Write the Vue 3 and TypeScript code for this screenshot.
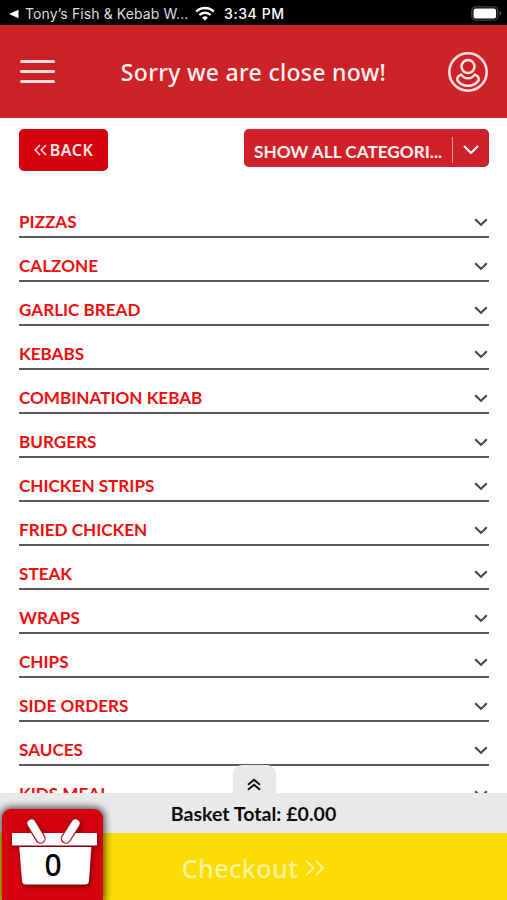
<script setup lang="ts">
import { ref } from 'vue'

const categories: string[] = [
  'PIZZAS',
  'CALZONE',
  'GARLIC BREAD',
  'KEBABS',
  'COMBINATION KEBAB',
  'BURGERS',
  'CHICKEN STRIPS',
  'FRIED CHICKEN',
  'STEAK',
  'WRAPS',
  'CHIPS',
  'SIDE ORDERS',
  'SAUCES',
  'KIDS MEAL',
]
const itemCount = ref(0)
const total = ref(0)
</script>

<template>
  <div class="screen">
    <div class="status">
      <svg class="return" width="10" height="10" viewBox="0 0 10 10"><path d="M0 5 9.5 .8v8.4z" fill="#fff" /></svg>
      <span class="return-app">Tony’s Fish &amp; Kebab W...</span>
      <svg class="wifi" width="20" height="15" viewBox="0 0 20 15" fill="none" stroke="#fff" stroke-width="2.5">
        <path d="M1.2 5.6a12.4 12.4 0 0 1 17.6 0" />
        <path d="M4.4 9a7.8 7.8 0 0 1 11.2 0" />
        <path d="M10 14.6 7.1 11.7a4.2 4.2 0 0 1 5.8 0z" fill="#fff" stroke="none" />
      </svg>
      <span class="time">3:34 PM</span>
      <svg class="battery" width="31" height="16" viewBox="0 0 31 16">
        <rect x=".8" y=".8" width="26" height="13.4" rx="4" fill="none" stroke="#444" stroke-width="1.3" />
        <rect x="2.5" y="2.5" width="22.6" height="10" rx="2.2" fill="#fff" />
        <path d="M28.6 5.2v4.6q1.5-.6 1.500-2.300t-1.500-2.300z" fill="#666" />
      </svg>
    </div>

    <header class="header">
      <button class="menu" aria-label="Menu"><i /><i /><i /></button>
      <h1 class="title">Sorry we are close now!</h1>
      <svg class="user" width="42" height="42" viewBox="0 0 42 42" fill="none" stroke="#ffe4e2" stroke-width="2.5">
        <circle cx="21" cy="21" r="18.7" />
        <circle cx="21" cy="15.5" r="6.5" />
        <path d="M14.300 23.600c-2.700 1-4.300 3.500-4 5.600 2.300 3.400 6.300 5.500 10.700 5.500s8.400-2.100 10.700-5.500c.3-2.100-1.300-4.600-4-5.600-1.700 2.400-4.100 3.700-6.700 3.700s-5-1.300-6.700-3.700z" stroke-linejoin="round" />
      </svg>
    </header>

    <main class="content">
      <div class="tools">
        <button class="back">
          <svg width="13" height="12" viewBox="0 0 13 12" fill="none" stroke="#ffdcdc" stroke-width="1.5"><path d="M6 1 1.200 6 6 11M12 1 7.200 6l4.800 5" /></svg>
          <span>BACK</span>
        </button>
        <div class="select">
          <span class="select-label">SHOW ALL CATEGORI...</span>
          <svg width="16" height="10" viewBox="0 0 16 10" fill="none" stroke="#fff" stroke-width="2" stroke-linecap="round" stroke-linejoin="round"><path d="M1.500 1.500 8 8l6.500-6.500" /></svg>
        </div>
      </div>
      <ul class="list">
        <li v-for="name in categories" :key="name" class="row">
          <span>{{ name }}</span>
          <svg width="14" height="9" viewBox="0 0 14 9" fill="none" stroke="#444" stroke-width="2.1"><path d="M1.200 1.300 7 6.900l5.800-5.600" /></svg>
        </li>
      </ul>
    </main>

    <footer class="footer">
      <button class="expand" aria-label="Expand basket">
        <svg width="14" height="13" viewBox="0 0 14 13" fill="none" stroke="#111" stroke-width="2"><path d="M1 6.800 7 1.800l6 5M1 11.800l6-5 6 5" /></svg>
      </button>
      <div class="total">Basket Total: £{{ total.toFixed(2) }}</div>
      <div class="checkout">
        <span>Checkout</span>
        <svg width="20" height="16" viewBox="0 0 20 16" fill="none" stroke="#fff39a" stroke-width="1.9"><path d="M1.500 1 8.500 8l-7 7M11 1l7 7-7 7" /></svg>
      </div>
      <div class="basket">
        <svg class="basket-art" width="101" height="91" viewBox="0 0 101 91">
          <g fill="#fff">
            <rect x="10" y="24" width="85" height="12.400" rx="1" />
            <path d="M17.300 38h72L87 72q-.4 3.500-4 3.500H24q-3.600 0-4-3.500z" />
          </g>
          <g stroke-linecap="round">
            <path d="M29.500 14.500 38.500 29.500M73.500 14.500 64 29.500" stroke="#b5121b" stroke-width="10.500" />
            <path d="M29.500 14.500 38.500 29.500M73.500 14.500 64 29.500" stroke="#fff" stroke-width="8" />
          </g>
        </svg>
        <span class="count">{{ itemCount }}</span>
      </div>
    </footer>
  </div>
</template>

<style>
body {
  background: #fff;
}
</style>

<style scoped>
* {
  box-sizing: border-box;
}
button {
  border: 0;
  padding: 0;
  margin: 0;
}
svg {
  display: block;
  flex: none;
}
.screen {
  width: 507px;
  height: 900px;
  display: grid;
  grid-template-rows: 25px 93px minmax(0, 1fr) 107px;
  overflow: hidden;
  background: #fff;
  font-family: Lato, sans-serif;
}
.status {
  display: flex;
  align-items: center;
  padding: 2px 5px 0 9px;
  background: #000;
  color: #fff;
  font-family: Inter, sans-serif;
  white-space: nowrap;
}
.return-app {
  width: 164px;
  margin-left: 6px;
  color: #ddd;
  font-size: 14px;
  letter-spacing: 0.1px;
}
.wifi {
  margin-left: 6px;
}
.time {
  margin-left: 9px;
  font-size: 14px;
  font-weight: 500;
  letter-spacing: 0.6px;
}
.battery {
  margin-left: auto;
}
.header {
  display: flex;
  align-items: center;
  justify-content: space-between;
  padding: 0 18px 0 20px;
  background: #ce2229;
}
.menu {
  display: grid;
  gap: 7px;
  width: 35px;
  background: none;
}
.menu i {
  height: 3px;
  border-radius: 2px;
  background: #ffdedc;
}
.title {
  margin: 0;
  padding-left: 5px;
  color: #fff3f2;
  font: 500 23px 'Noto Sans', sans-serif;
  letter-spacing: 0.3px;
  white-space: nowrap;
}
.content {
  padding: 11px 18px 0 19px;
  overflow: hidden;
}
.tools {
  display: flex;
  justify-content: space-between;
  align-items: flex-start;
  height: 65px;
}
.back {
  display: flex;
  align-items: center;
  justify-content: center;
  gap: 3px;
  width: 89px;
  height: 42px;
  border-radius: 5px;
  background: #d4020e;
  color: #ffe6e6;
  font: 600 16px 'Noto Sans', sans-serif;
  letter-spacing: 0.5px;
}
.select {
  display: flex;
  align-items: center;
  width: 245px;
  height: 38px;
  padding: 6px 10px 0;
  border-radius: 5px;
  background: #ce2129;
  color: #fff0ef;
  font-size: 17.2px;
  font-weight: 700;
  white-space: nowrap;
}
.select-label {
  width: 198px;
}
.select svg {
  box-sizing: content-box;
  padding: 8px 0 8px 10px;
  margin-top: -2px;
  border-left: 1px solid #ec9a9c;
}
.list {
  margin: 0;
  padding: 0;
  list-style: none;
}
.row {
  display: flex;
  align-items: center;
  justify-content: space-between;
  height: 44px;
  padding: 13px 1px 0 0;
  border-bottom: 2px solid #5a5a5a;
  color: #f00d0d;
  font-size: 17.1px;
  font-weight: 700;
}
.row svg {
  margin-top: 2px;
}
.footer {
  position: relative;
  display: grid;
  grid-template-rows: 40px 67px;
}
.total {
  display: flex;
  align-items: center;
  justify-content: center;
  background: #e9e9e9;
  color: #0c0c0c;
  font-size: 19.6px;
  font-weight: 700;
}
.checkout {
  display: flex;
  align-items: center;
  justify-content: center;
  gap: 7px;
  padding-top: 3px;
  background: #fadb03;
  color: #fff39a;
  font: 500 25px 'Noto Sans', sans-serif;
  letter-spacing: 0.5px;
}
.expand {
  position: absolute;
  top: -28px;
  left: 233px;
  display: flex;
  justify-content: center;
  width: 43px;
  height: 28px;
  padding: 13px 2px 0 0;
  border-radius: 9px 9px 0 0;
  background: #e9e9e9;
}
.basket {
  position: absolute;
  left: 2px;
  bottom: 0;
  width: 101px;
  height: 91px;
  border-radius: 9px 9px 0 0;
  background: #d4020e;
  box-shadow: 0 0 7px 2px rgba(0, 0, 0, 0.65);
}
.basket-art {
  filter: drop-shadow(1px 2px 2px rgba(70, 0, 0, 0.7));
}
.count {
  position: absolute;
  top: 38px;
  left: 0;
  width: 102px;
  color: #000;
  font: 500 30px/36px 'Noto Sans', sans-serif;
  text-align: center;
}
</style>
